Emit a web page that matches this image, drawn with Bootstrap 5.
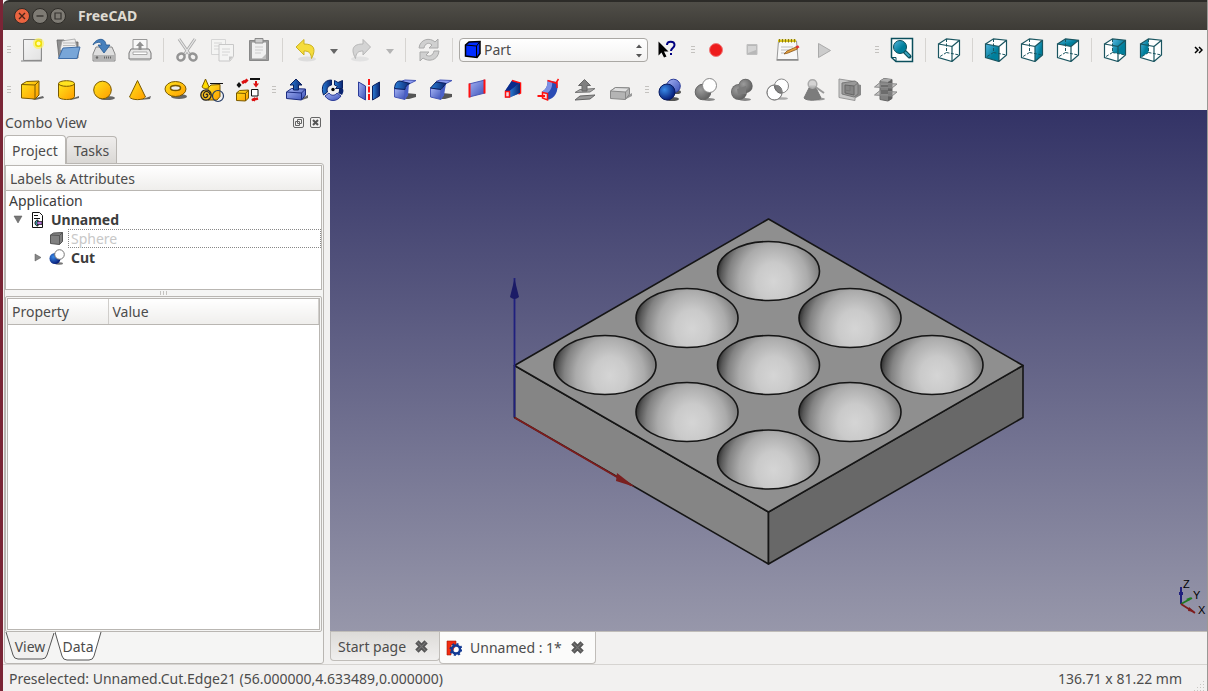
<!DOCTYPE html>
<html lang="en">
<head>
<meta charset="utf-8">
<meta name="viewport" content="width=device-width, initial-scale=1">
<title>FreeCAD</title>
<link href="https://cdn.jsdelivr.net/npm/bootstrap@5.3.0/dist/css/bootstrap.min.css" rel="stylesheet">
<style>
body{font-family:"Noto Sans","Open Sans",sans-serif;font-size:14px;line-height:19px;color:#4c4c4c;background:#f2f1f0;border-left:3px solid #7a2536;border-right:1px solid #9a9894}
button{font:inherit;color:inherit;border:0;background:none;padding:0}
.titlebar{height:30px;padding-left:10px;background:linear-gradient(#504e48,#3d3b36);border-top:2px solid #2c2b28;border-radius:6px 0 0 0;color:#dfdbd2}
.titlebar h1{font-size:14px;line-height:18px;font-weight:700;padding-left:11px}
.winbtn{width:18px;height:18px}
.winbtn svg,.tool svg,.viewsmall svg{display:block}
.toolrow{height:40px}
.tool{width:36px;height:36px;display:flex;align-items:center;justify-content:center;flex:none}
.tool.slim{width:20px}
.tool svg{width:24px;height:24px;overflow:visible}
.grip{width:11px;height:12px;flex:none;background:linear-gradient(#c4c2bf,#c4c2bf) 4px 2px/4px 1px no-repeat,linear-gradient(#c4c2bf,#c4c2bf) 4px 5px/4px 1px no-repeat,linear-gradient(#c4c2bf,#c4c2bf) 4px 8px/4px 1px no-repeat}
.divider{width:11px;height:24px;flex:none;background:linear-gradient(#d6d4d1,#d6d4d1) 5px 0/1px 100% no-repeat}
.group-gap{margin-left:2px}
.group-wide{margin-left:29px}
.bench{width:189px;margin:0 1px}
.bench select{appearance:none;width:100%;height:24px;font-size:14px;line-height:18px;color:#4c4c4c;border:1px solid #aaa8a4;border-radius:4px;padding:0 24px;background:linear-gradient(#fff,#f3f2f1)}
.bench svg{pointer-events:none}
.workspace{min-height:0}
.combo{width:327px;flex:none;padding:0 6px 0 1px}
.combo-head{height:25px;padding:0 2px 0 1px}
.sidetab{height:29px;line-height:27px;padding:0 7px;border:1px solid #b9b6b2;border-bottom:0;border-radius:4px 4px 0 0;background:linear-gradient(#fff,#f7f7f6);margin-bottom:-1px;position:relative}
.sidetab.idle{height:27px;padding:0 7px;background:linear-gradient(#efedec,#dad8d5);margin:0}
.pane{border:1px solid #b9b6b2;border-radius:0 3px 3px 3px;background:#f5f5f4;padding:1px 1px 2px 0;min-height:0}
.treebox{height:125px;background:#fff;border:1px solid #b9b6b2}
.headcell{height:25px;line-height:25px;padding:0 4px;background:linear-gradient(#fff,#efeeec);border-bottom:1px solid #b9b6b2}
.treebox ul{color:#3c3c3c}
.treebox li>div{height:19px}
.rootrow{padding-left:3px}
.faded{color:#c8c8c8;border:1px dotted #888;line-height:17px;padding-left:2px}
.split i{display:block;width:8px;height:4px;margin:1px auto;background:repeating-linear-gradient(90deg,#c4c2bf 0 1px,transparent 1px 3px)}
.propbox{border:1px solid #b9b6b2;padding:1px;border-radius:2px;min-height:0}
.propbox>div{border:1px solid #b9b6b2;background:#fff}
.propbox table{table-layout:fixed}
.propbox th{font-weight:400;height:25px;padding:0 4px;background:linear-gradient(#fff,#efeeec);border-bottom:1px solid #b9b6b2;border-right:1px solid #d0cecb}
.propbox th:first-child{width:100px}
.foot-tab{height:29px;width:50px;position:relative}
.foot-tab svg{position:absolute;left:0;top:0}
.foot-tab span{position:relative}
.scene{background:linear-gradient(#333366,#9797aa);min-height:0}
.doctab{height:29px;padding:0 8px 0 7px;border:1px solid #c0bdb9;border-top:0;border-radius:0 0 4px 4px;background:linear-gradient(#dddbd8,#f0efee);gap:8px}
.doctab.first{padding-right:10px}
.doctab.current{height:32px;padding:0 10px 0 6px;background:#fbfbfa;margin-left:-1px}
.docbar{height:33px;border-top:1px solid #c0bdb9}
.status{height:27px;border-top:1px solid #d6d4d1;padding:0 25px 0 6px;line-height:27px}
</style>
</head>
<body class="vh-100 d-flex flex-column overflow-hidden">
<svg width="0" height="0" class="position-absolute" aria-hidden="true">
<defs>
<linearGradient id="yel" x1="0" y1="0" x2="1" y2="1"><stop offset="0" stop-color="#ffe51c"/><stop offset="1" stop-color="#ff9c00"/></linearGradient>
<linearGradient id="blu" x1="0" y1="0" x2="1" y2="1"><stop offset="0" stop-color="#a6b4f4"/><stop offset="1" stop-color="#3a50b8"/></linearGradient>
<linearGradient id="nav" x1="0" y1="0" x2="1" y2="0"><stop offset="0" stop-color="#2a7fd8"/><stop offset="1" stop-color="#0a2470"/></linearGradient>
<linearGradient id="gry" x1="0" y1="0" x2="1" y2="1"><stop offset="0" stop-color="#fafafa"/><stop offset="1" stop-color="#bcbcbc"/></linearGradient>
<linearGradient id="teal" x1="0" y1="0" x2="1" y2="1"><stop offset="0" stop-color="#56b6e0"/><stop offset=".6" stop-color="#007f9c"/></linearGradient>
<radialGradient id="ball" cx=".35" cy=".35" r=".65"><stop offset="0" stop-color="#3a8be8"/><stop offset="1" stop-color="#08207c"/></radialGradient>
<radialGradient id="gball" cx=".35" cy=".35" r=".75"><stop offset="0" stop-color="#9c9c9c"/><stop offset="1" stop-color="#5c5c5c"/></radialGradient>
<linearGradient id="dk" x1="0" y1="0" x2="1" y2="1"><stop offset="0" stop-color="#c0c0c0"/><stop offset="1" stop-color="#626262"/></linearGradient>
<symbol id="wire" viewBox="0 0 24 24"><path d="M1.500 6 15 8.500V23.500L1.500 19.500ZM1.500 6 9.500.8 22.500 2.200V17L15 23.500M15 8.500 22.500 2.200" fill="none" stroke="#1a5560" stroke-width="1.200"/><path d="M9.500 1V14.500L1.500 19.500M9.500 14.500 22.500 17" fill="none" stroke="#1a5560" stroke-dasharray="3 1.500"/></symbol>
<symbol id="xmark" viewBox="0 0 13 13"><path d="m2.500 2.500 8 8m0-8-8 8" stroke="#555" stroke-width="4"/><path d="m3 3 7 7m0-7-7 7" stroke="#777" stroke-width="1"/></symbol>
</defs></svg>

<header class="titlebar d-flex align-items-center">
<button class="winbtn" aria-label="Close"><svg width="18" height="18"><circle cx="9" cy="9" r="7.500" fill="#ea6440" stroke="#2e2c28"/><path d="m6 6 6 6m0-6-6 6" stroke="#4a2418" stroke-width="1.400"/></svg></button>
<button class="winbtn" aria-label="Minimize"><svg width="18" height="18"><circle cx="9" cy="9" r="7.500" fill="#7e7b74" stroke="#2e2c28"/><path d="M5.500 9h7" stroke="#35332f" stroke-width="1.400"/></svg></button>
<button class="winbtn" aria-label="Maximize"><svg width="18" height="18"><circle cx="9" cy="9" r="7.500" fill="#7e7b74" stroke="#2e2c28"/><path d="M6 6h6v6H6z" fill="none" stroke="#35332f" stroke-width="1.200"/></svg></button>
<h1 class="m-0">FreeCAD</h1>
</header>

<nav class="toolrow d-flex align-items-center" aria-label="File and view tools">
<i class="grip"></i>
<button class="tool" aria-label="New"><svg viewBox="0 0 24 24"><path d="M1 23h21" stroke="#bbb" stroke-width="2"/><path d="M3.500 1.500h18v21h-18z" fill="url(#gry)" stroke="#8c8c8c"/><path d="M4.500 2.500h16v19h-16z" fill="#f2f2f2" opacity=".7"/><circle cx="18.500" cy="5.500" r="5.500" fill="#fff35a" opacity=".7"/><circle cx="18.500" cy="5.500" r="2.800" fill="#fffbb0" stroke="#f0e000" stroke-width="1.500"/></svg></button>
<button class="tool" aria-label="Open"><svg viewBox="0 0 24 24"><path d="M1 2h7l2 2h12v16H3z" fill="#8f8f8f" stroke="#666" stroke-width=".8"/><path d="m6 3 13-2 2 11H4z" fill="#eee" stroke="#999" stroke-width=".7"/><path d="M7 5h12M7 7.500h12" stroke="#bbb"/><path d="m7 10 17-1-3 11.500H2.500z" fill="#78a6d8" stroke="#3f6ea8"/></svg></button>
<button class="tool" aria-label="Save"><svg viewBox="0 0 24 24"><path d="m4 9-3 7v7h22v-7L20 9z" fill="#dedede" stroke="#888"/><path d="M2 17h20v5H2z" fill="#b4b4b4"/><path d="M12 19.500h8" stroke="#666" stroke-width="2" stroke-dasharray="1 1"/><circle cx="5" cy="19.500" r="1.200" fill="#666"/><path d="M1 7C3 1 13-2 14 7h4l-6 8-6-8h3.500C9 3 4 4 1 7Z" fill="#4680bd" stroke="#25568e" stroke-width=".8"/></svg></button>
<button class="tool" aria-label="Print"><svg viewBox="0 0 24 24"><path d="M5 12V1.500h14V12" fill="#f8f8f8" stroke="#999"/><path d="M3 11h18l2 4v6H1v-6z" fill="#e6e6e6" stroke="#777"/><path d="M12 3.500 8 8h2.500v4h3V8H16z" fill="#909090"/><path d="M5 14h14v2.500H5z" fill="#fff" stroke="#999" stroke-width=".8"/><path d="M2 21.500h20" stroke="#aaa" stroke-width="2"/></svg></button>
<i class="divider"></i>
<button class="tool" aria-label="Cut"><svg viewBox="0 0 24 24"><path d="m4 1 11 16M20 1 9 17" stroke="#aaa" stroke-width="3"/><path d="m4 1 11 16M20 1 9 17" stroke="#e8e8e8" stroke-width="1.300"/><ellipse cx="6" cy="19" rx="3.700" ry="3.300" fill="none" stroke="#949494" stroke-width="2.500" transform="rotate(-35 6 19)"/><ellipse cx="18" cy="19" rx="3.700" ry="3.300" fill="none" stroke="#949494" stroke-width="2.500" transform="rotate(35 18 19)"/></svg></button>
<button class="tool" aria-label="Copy"><svg viewBox="0 0 24 24" opacity=".75"><path d="M.5 1.500h14v15H.5z" fill="#f5f5f5" stroke="#ccc"/><path d="M3 5h8M3 8h5M3 11h5" stroke="#ccc"/><path d="M8 6.500h14.500v12L19 23H8z" fill="#f5f5f5" stroke="#bbb"/><path d="M11 11h8M11 14h8M11 17h6" stroke="#ccc"/><path d="M22 18.500h-4V23" fill="#bbb"/></svg></button>
<button class="tool" aria-label="Paste"><svg viewBox="0 0 24 24"><path d="M2.500 2.500h19v20h-19z" fill="#999" stroke="#888"/><path d="M5 4.500h14v16H5z" fill="#f0f0f0"/><path d="M8 .5h8V5H8z" fill="#ccc" stroke="#8a8a8a"/><path d="M8 9h8M8 12h8M8 15h6" stroke="#ccc" stroke-width="1.200"/><path d="m19 16-4.500 4.500H19z" fill="#bbb"/></svg></button>
<i class="divider"></i>
<button class="tool" aria-label="Undo"><svg viewBox="0 0 24 24"><ellipse cx="13" cy="21" rx="9" ry="2.500" fill="#ddd"/><path d="M2 9 10 1.500V6c9 0 13 4 7.500 14.500C17 15 15 13 10 13v4z" fill="#f5dc3c" stroke="#cbb222"/></svg></button>
<button class="tool slim" aria-label="Undo history"><svg viewBox="0 0 24 24"><path d="M8 11h8l-4 5z" fill="#666"/></svg></button>
<button class="tool" aria-label="Redo"><svg viewBox="0 0 24 24"><ellipse cx="10" cy="21" rx="9" ry="2.500" fill="#e2e2e2"/><path d="M20.500 9 13 1.500V6C4 6 0 10 5.500 20.500 6 15 8 13 13 13v4z" fill="#d4d4d4" stroke="#b6b6b6"/></svg></button>
<button class="tool slim" aria-label="Redo history"><svg viewBox="0 0 24 24"><path d="M8 11h8l-4 5z" fill="#b4b4b4"/></svg></button>
<i class="divider"></i>
<button class="tool" aria-label="Refresh"><svg viewBox="0 0 24 24"><path d="M2 10C3 1 13-1 18 4l3-3v9h-9l3-3c-3-3-7-2-8 3z" fill="#d0d0d0" stroke="#aaa"/><path d="M22 13c-1 10-11 11-16 7l-3 3v-9h9l-3 3c3 2 7 1 8-4z" fill="#d0d0d0" stroke="#aaa"/></svg></button>
<i class="divider"></i>
<div class="bench position-relative">
<select aria-label="Workbench"><option>Part</option></select>
<svg class="position-absolute top-0 start-0" width="188" height="24" aria-hidden="true"><path d="m6.500 7 3.500-3 11-.5v12L18 19.500 6.500 18z" fill="#002cff" stroke="#000" stroke-width="1.500"/><path d="M6.500 7 17.500 8v11.500M17.500 8 21 3.500" fill="none" stroke="#000"/><path d="M177 10h6l-3-3.500zM177 16h6l-3 3.500z" fill="#555"/></svg>
</div>
<button class="tool" aria-label="What's this"><svg viewBox="0 0 24 24"><path d="M3.500 3.500v14l3-3 2.500 5 2.500-1-2.500-5h4.500z" fill="#000"/><path d="M12 7c0-4.500 7.500-4.500 7.500 0 0 3-3.500 3-3.500 6" fill="none" stroke="#000080" stroke-width="2"/><path d="M15 15h2v2h-2z" fill="#000080"/></svg></button>
<i class="grip group-gap"></i>
<button class="tool" aria-label="Record macro"><svg viewBox="0 0 24 24"><circle cx="12" cy="12" r="6.500" fill="#ee1c1c" stroke="#f07a7a"/></svg></button>
<button class="tool" aria-label="Stop"><svg viewBox="0 0 24 24"><path d="M7 6.500h10v10H7z" fill="#b8b8b8" stroke="#c0c0c0"/><path d="M8 8h8v4l-8 3z" fill="#d4d4d4"/></svg></button>
<button class="tool" aria-label="Macros"><svg viewBox="0 0 24 24"><path d="M2.500 3h18l1.500 18.500H1z" fill="#f8f8f8" stroke="#999"/><path d="M.5 22h22" stroke="#888" stroke-width="1.500"/><path d="M2 1.500h18V4H2z" fill="#dcc51c"/><path d="M3.500 1v3.500m3-3.500v3.500m3-3.500v3.500m3-3.500v3.500m3-3.500v3.500m3-3.500v3.500" stroke="#8a7a10"/><path d="M5 9h12M5 12h9M5 15h4" stroke="#bbb"/><path d="m8 16 3-3 9-4 1.500 2-9.500 4z" fill="#e8a33c" stroke="#88551c" stroke-width=".8"/><path d="m19.500 8.500 2.500-1.200 1.500 2-2.500 1.500z" fill="#e23030"/></svg></button>
<button class="tool" aria-label="Run macro"><svg viewBox="0 0 24 24"><path d="M6.500 5.500v14l12-7z" fill="#ccc" stroke="#aaa"/></svg></button>
<i class="grip group-wide"></i><i class="group-gap"></i>
<button class="tool" aria-label="Fit all"><svg viewBox="0 0 24 24"><path d="M1.500.5h21v23H6l-4.500-4z" fill="#fff" stroke="#0b4f5c" stroke-width="1.500"/><path d="M1.500 19.500H6v4" fill="none" stroke="#0b4f5c"/><path d="m14 13 5.500 5.500" stroke="#0b4f5c" stroke-width="4" stroke-linecap="round"/><path d="m15 14 4.500 4.500" stroke="#3ba3bd" stroke-width="2"/><circle cx="10" cy="9" r="6.500" fill="url(#teal)" stroke="#0b4f5c"/></svg></button>
<i class="divider"></i>
<button class="tool" aria-label="Axonometric"><svg><path d="M1.500 6 9.500.8 22.500 2.200V17L15 23.500 1.500 19.500Z" fill="#fff"/><use href="#wire"/></svg></button>
<i class="divider"></i>
<button class="tool" aria-label="Front"><svg><path d="M1.500 6 9.500.8 22.500 2.200V17L15 23.500 1.500 19.500Z" fill="#fff"/><path d="M1.500 6 15 8.500v15l-13.500-4z" fill="url(#teal)"/><use href="#wire"/></svg></button>
<button class="tool" aria-label="Right"><svg><path d="M1.500 6 9.500.8 22.500 2.200V17L15 23.500 1.500 19.500Z" fill="#fff"/><path d="m15 8.500 7.500-6.300V17L15 23.500z" fill="url(#teal)"/><use href="#wire"/></svg></button>
<button class="tool" aria-label="Top"><svg><path d="M1.500 6 9.500.8 22.500 2.200V17L15 23.500 1.500 19.500Z" fill="#fff"/><path d="m1.500 6 8-5.200 13 1.400-7.500 6.300z" fill="url(#teal)"/><use href="#wire"/></svg></button>
<i class="divider"></i>
<button class="tool" aria-label="Rear"><svg><path d="M1.500 6 9.500.8 22.500 2.200V17L15 23.500 1.500 19.500Z" fill="#fff"/><path d="m9.500 1 13 1.200V17l-13-2.500z" fill="url(#teal)"/><use href="#wire"/></svg></button>
<button class="tool" aria-label="Left"><svg><path d="M1.500 6 9.500.8 22.500 2.200V17L15 23.500 1.500 19.500Z" fill="#fff"/><path d="m1.500 6 8-5v13.500l-8 5z" fill="url(#teal)"/><use href="#wire"/></svg></button>
<button class="ms-auto pe-1" aria-label="More tools"><svg class="d-block" width="9" height="8"><path d="m1 1 3 3-3 3m4-6 3 3-3 3" fill="none" stroke="#000" stroke-width="1.500"/></svg></button>
</nav>

<nav class="toolrow d-flex align-items-center" aria-label="Part tools">
<i class="grip"></i>
<button class="tool" aria-label="Box"><svg viewBox="0 0 24 24"><path d="m12 21 11-3 1 2-9 2z" fill="#666"/><path d="m1.500 6.500 5-3 12.500-.5v14l-4 4-13.500-1z" fill="url(#yel)" stroke="#7a5a00"/><path d="m1.500 6.500 13.500.5v14M15 7l4-4" fill="none" stroke="#7a5a00"/></svg></button>
<button class="tool" aria-label="Cylinder"><svg viewBox="0 0 24 24"><path d="M12 22 23 18v2l-8 2z" fill="#666"/><path d="M2.500 5.500v13c0 4 16 4 16 0v-13" fill="url(#yel)" stroke="#7a5a00"/><ellipse cx="10.500" cy="5.500" rx="8" ry="2.800" fill="#ffe320" stroke="#7a5a00"/></svg></button>
<button class="tool" aria-label="Sphere"><svg viewBox="0 0 24 24"><ellipse cx="15" cy="20" rx="8" ry="2" fill="#666"/><circle cx="10.500" cy="12" r="8.800" fill="url(#yel)" stroke="#7a5a00"/></svg></button>
<button class="tool" aria-label="Cone"><svg viewBox="0 0 24 24"><path d="m12 22 11-4-1 3z" fill="#666"/><path d="M9.500 2.500 1.500 19c2 3.500 14 3.500 16 0z" fill="url(#yel)" stroke="#7a5a00"/></svg></button>
<button class="tool" aria-label="Torus"><svg viewBox="0 0 24 24"><ellipse cx="15" cy="18.500" rx="8" ry="2.500" fill="#666"/><ellipse cx="11.500" cy="11" rx="10.500" ry="7.500" fill="url(#yel)" stroke="#7a5a00"/><ellipse cx="11.500" cy="10" rx="5" ry="2.500" fill="#eee" stroke="#7a5a00" stroke-width="1.500"/></svg></button>
<button class="tool" aria-label="Primitives"><svg viewBox="0 0 24 24"><path d="m8 10 3-3 9-.5v12l-3 3.500H8z" fill="url(#yel)" stroke="#7a5a00"/><path d="M5.500 1 2 9c1 2 6 2 7 0z" fill="#ffdc00" stroke="#7a5a00"/><path d="M10 5.500h13" stroke="#111"/><circle cx="6" cy="17" r="5.200" fill="#f6be20" stroke="#222" stroke-width="1.300"/><path d="M6 17c1-2 3 0 1 2s-5-1-3-4 6-1 6 2" fill="none" stroke="#222" stroke-width="1.200"/><circle cx="18" cy="18" r="5.500" fill="none" stroke="#223a66" stroke-width="1.200"/></svg></button>
<button class="tool" aria-label="Shape builder"><svg viewBox="0 0 24 24"><path d="m.5 7 2.500-3L5.500 7 3 10z" fill="#111"/><path d="m6 5 3-2m-.5 1.500 3-3" stroke="#d11" stroke-width="3"/><path d="M14 1h10" stroke="#111" stroke-width="2"/><path d="M20 3v4" stroke="#d11" stroke-width="2"/><path d="m17 5.500 3 4 3-4z" fill="#d11"/><path d="M15.500 11.500H22V18h-6.500z" fill="#fff" stroke="#111"/><path d="m.5 15 3-2.500 9-.5v8l-3 3-9-.5z" fill="url(#yel)" stroke="#7a5a00"/><path d="m.5 15 9 .5V23m0-7.500 3-3.500" fill="none" stroke="#7a5a00"/><path d="m16 22 6-1.500" stroke="#d11" stroke-width="2.500"/><path d="m15 22 4-3v4.500z" fill="#d11"/></svg></button>
<i class="grip group-gap"></i>
<button class="tool" aria-label="Extrude"><svg viewBox="0 0 24 24"><path d="m14 22 9-5v3l-6 2z" fill="#666"/><path d="m1.500 14 5-3.500 14 .5v6l-4 5-15-1.500z" fill="url(#blu)" stroke="#1b2b80"/><path d="m1.500 14 15 1v6.500m0-6.500 4-4" fill="none" stroke="#1b2b80"/><path d="M11 1 5 7h3.500v5h5V7H17z" fill="url(#nav)" stroke="#0a2060"/></svg></button>
<button class="tool" aria-label="Revolve"><svg viewBox="0 0 24 24"><path d="M10.500 2v5c-4 1-5 4-4 7l-4 3C-.5 9 2.500 2 10.500 2Z" fill="url(#nav)" stroke="#0a2060"/><path d="M4 18l4-3c2 3 6 3 8 0l4 3c-4 6-12 6-16 0Z" fill="url(#blu)" stroke="#2c3c98"/><path d="M13.500 2.500 17 4.500l4.500-2v8h-7l2-2-3-1.500z" fill="url(#nav)" stroke="#0a2060"/><path d="M18 11c0 2 0 3-1 4l4 2c1-2 2-4 1-6z" fill="#0a2470"/><circle cx="12" cy="11.500" r="1.700"/></svg></button>
<button class="tool" aria-label="Mirror"><svg viewBox="0 0 24 24"><path d="m1.500 4 7 4v14l-7-4z" fill="url(#blu)" stroke="#2c3c98"/><path d="m22.500 4-7 4v14l7-4z" fill="url(#nav)" stroke="#0a2060"/><path d="M12 1v22" stroke="#f11" stroke-width="2" stroke-dasharray="6 1.500"/></svg></button>
<button class="tool" aria-label="Fillet"><svg viewBox="0 0 24 24"><path d="m12 21 1-6 10 1v3l-7 2z" fill="#555"/><path d="M1.500 10.500 12 11.500v10L1.500 19z" fill="url(#blu)" stroke="#4858b8"/><path d="M12 21.500v-10c0-3 1-5 4-6l-1 12z" fill="#4a60c8"/><path d="m12 2 11 .5-6 3L6 4z" fill="#8c9cf0" stroke="#4858b8"/><path d="M1.500 10.500C2 5 4 3 7 3l10 2.500c-3 1-5 3-5 6z" fill="url(#nav)" stroke="#0a2060"/></svg></button>
<button class="tool" aria-label="Chamfer"><svg viewBox="0 0 24 24"><path d="m12 21 1-6 10 1v3l-7 2z" fill="#555"/><path d="M1.500 10 12 11.500v10L1.500 19z" fill="url(#blu)" stroke="#4858b8"/><path d="m12 21.500v-10l5-6-2 12z" fill="#4a60c8"/><path d="m11 2 12 .5-6 3-10-2z" fill="#8c9cf0" stroke="#4858b8"/><path d="M1.500 10 7 4l10 1.500-5 6z" fill="url(#nav)" stroke="#0a2060"/></svg></button>
<button class="tool" aria-label="Ruled surface"><svg viewBox="0 0 24 24"><path d="m4 6 16-4v13L4 19z" fill="url(#blu)"/><path d="m4 6 16-4M4 19l16-4" stroke="#4858b8"/><path d="M4.500 5.500v14M19.500 1.500v14" stroke="#f11" stroke-width="2"/></svg></button>
<button class="tool" aria-label="Loft"><svg viewBox="0 0 24 24"><path d="m4 13 7-10.500 8.500 2.500v10L8.500 19.500H4z" fill="#3b55b4"/><path d="m4 13 7-10.500L19 5 8.500 13z" fill="#0a2c8c"/><path d="M11 2.500 19.500 5v10l-2 1" fill="none" stroke="#f11" stroke-width="1.500"/><path d="M8.500 13 19 5v10L8.500 19.500z" fill="url(#nav)"/><path d="M4.500 13.500h4v5.500h-4z" fill="#f4d8e0" stroke="#f11" stroke-width="1.500"/></svg></button>
<button class="tool" aria-label="Sweep"><svg viewBox="0 0 24 24"><path d="M5 13.500C9 12 11 7 10.500 2.500L20 4c2 9-2 17-10 18z" fill="#2a4cb4"/><path d="M5 13.500C9 12 11 7 10.500 2.500L15 3c1 6-2 11-6 13z" fill="#7c90e4"/><path d="M10.500 2.500 19 5l2.500-4M20 4v6" fill="none" stroke="#f11" stroke-width="1.500"/><path d="M5.500 14.500l5 1V22l-5-2z" fill="#f4d8e0" stroke="#f11" stroke-width="1.500"/><path d="M.5 18H8" stroke="#f11" stroke-width="2"/></svg></button>
<button class="tool" aria-label="Offset"><svg viewBox="0 0 24 24"><path d="m2 22 5-4 15-1-5 4z" fill="#999" stroke="#666"/><path d="m2 14.500 5-3 15-1-5 3.500z" fill="#a8a8a8" stroke="#777"/><path d="m11.500 1.500-6 6H9V13h5V7.500h3.500z" fill="#808080" stroke="#666"/></svg></button>
<button class="tool" aria-label="Thickness"><svg viewBox="0 0 24 24"><path d="m13 21 10-6v3l-6 3z" fill="#999"/><path d="m1.500 13 5-3.500 14 .5v6l-4 5.500-15-1z" fill="#b4b4b4" stroke="#888"/><path d="m1.500 13 5-3.500 14 .5-4 4z" fill="#e0e0e0" stroke="#888"/><path d="M16.500 14v7" stroke="#888"/></svg></button>
<i class="grip group-gap"></i>
<button class="tool" aria-label="Boolean"><svg viewBox="0 0 24 24"><ellipse cx="14" cy="21" rx="7" ry="2" fill="#555"/><ellipse cx="19" cy="14" rx="4" ry="2" fill="#555"/><circle cx="15.500" cy="8" r="6.800" fill="url(#blu)" stroke="#2c3c98"/><circle cx="9" cy="14" r="8" fill="url(#ball)" stroke="#081a60"/></svg></button>
<button class="tool" aria-label="Cut shapes"><svg viewBox="0 0 24 24"><ellipse cx="15" cy="21.500" rx="6" ry="1.500" fill="#888"/><circle cx="9" cy="14" r="7.800" fill="url(#gball)" stroke="#666"/><circle cx="15.500" cy="7.500" r="7" fill="#fff" stroke="#888"/></svg></button>
<button class="tool" aria-label="Union"><svg viewBox="0 0 24 24"><ellipse cx="15" cy="21.500" rx="6" ry="1.500" fill="#888"/><circle cx="9" cy="14" r="8" fill="#666"/><circle cx="15.500" cy="8" r="7.200" fill="#666"/><circle cx="9" cy="14" r="7.300" fill="url(#gball)"/><circle cx="15.500" cy="8" r="6.500" fill="url(#gball)"/><path d="m7 11 9-3v8H8z" fill="#7c7c7c"/></svg></button>
<button class="tool" aria-label="Intersection"><svg viewBox="0 0 24 24"><ellipse cx="16" cy="20.500" rx="6" ry="1.300" fill="#aaa"/><circle cx="8.500" cy="14.500" r="7.500" fill="#fff" stroke="#888"/><circle cx="15.500" cy="8" r="7" fill="#fff" stroke="#888"/><path d="M8.500 8c4-2 8 2 7.500 7-4 1-7-3-7.500-7Z" fill="#808080" stroke="#666"/><circle cx="8.500" cy="14.500" r="7.500" fill="none" stroke="#888"/></svg></button>
<button class="tool" aria-label="Check geometry"><svg viewBox="0 0 24 24"><ellipse cx="17" cy="21" rx="6" ry="1.500" fill="#999"/><path d="M8 8 2 20c2 3 14 3 17 0L13 8z" fill="#7c7c7c" stroke="#777"/><circle cx="10.500" cy="6" r="4.300" fill="#ccc" fill-opacity=".8" stroke="#aaa" stroke-width="1.500"/><path d="m13.500 9 8.500 6" stroke="#999" stroke-width="2"/></svg></button>
<button class="tool" aria-label="Section"><svg viewBox="0 0 24 24"><path d="m16 5 7 2v10l-7 4z" fill="#888"/><path d="M1 1l16 2.500v19L1 19.500z" fill="#c8c8c8" stroke="#999"/><path d="M4 5l13-2 3 2v11l-4 3-12-3z" fill="#999" stroke="#777"/><path d="m7 7 9 1v9l-9-2z" fill="#858585" stroke="#666"/><path d="m16 8 4-3M7 12l5 1V8" stroke="#777" fill="none"/></svg></button>
<button class="tool" aria-label="Cross sections"><svg viewBox="0 0 24 24"><path d="m6 3 4-2.500 8 1v19L14 23l-8-1.500z" fill="#808080" stroke="#666"/><path d="m6 3 4-2.500 8 1L14 4z" fill="#aaa"/><path d="M14 4l4-2.500v19L14 23z" fill="#606060"/><path d="m.5 9 5-4L23 6l-5 4zM.5 17l5-4 17.500 1-5 4z" fill="#999" fill-opacity=".5" stroke="#888"/><path d="M7 7h7v2H7zM7 12h7v4H7z" fill="#6c6c6c"/></svg></button>
</nav>

<main class="workspace d-flex flex-grow-1">
<aside class="combo d-flex flex-column">
<div class="combo-head d-flex align-items-center"><span class="me-auto">Combo View</span>
<button class="viewsmall me-1" aria-label="Float panel"><svg width="13" height="13"><rect x="1.500" y="1.500" width="10" height="10" rx="1.500" fill="none" stroke="#666"/><path d="M5.500 3.500h4v4h-4zM3.500 5.500h4v4h-4z" fill="#f2f1f0" stroke="#666"/></svg></button>
<button class="viewsmall" aria-label="Close panel"><svg width="13" height="13"><rect x="1.500" y="1.500" width="10" height="10" rx="1.500" fill="none" stroke="#666"/><path d="m4 4 5 5m0-5-5 5" stroke="#555" stroke-width="2"/></svg></button></div>
<div class="d-flex align-items-end"><button class="sidetab">Project</button><button class="sidetab idle">Tasks</button></div>
<section class="pane d-flex flex-column flex-grow-1">
<div class="treebox"><div class="headcell">Labels &amp; Attributes</div>
<ul class="list-unstyled m-0">
<li><div class="rootrow">Application</div></li>
<li><div class="d-flex align-items-center fw-bold"><svg width="45" height="19" aria-hidden="true"><path d="M8 6h8l-4 7z" fill="#777" stroke="#555" stroke-width=".5"/><path d="M26.500 2.500h7l3 3v12h-10z" fill="#fff" stroke="#111"/><path d="M28 5.500h4M28 8.500h6" stroke="#111"/><path d="M32 10c-4 0-4 6 0 6z" fill="#48c8d0" stroke="#111"/><path d="M31 11.500h5v3h-5z" fill="#b070d0" stroke="#111" stroke-width=".7"/></svg>Unnamed</div></li>
<li><div class="d-flex align-items-center"><svg width="62" height="19" aria-hidden="true"><path d="m44.500 6 3-2 9-.5v9l-3 3-9-1z" fill="#808080" stroke="#555"/><path d="m44.500 6 9 .5v9m0-9 3-3" fill="none" stroke="#555"/></svg><span class="faded flex-grow-1">Sphere</span></div></li>
<li><div class="d-flex align-items-center fw-bold"><svg width="65" height="19" aria-hidden="true"><path d="M29 6v7l6-3.500z" fill="#888" stroke="#555" stroke-width=".5"/><ellipse cx="53" cy="15.500" rx="4" ry="1.200" fill="#777"/><circle cx="49" cy="10.500" r="5.500" fill="url(#ball)"/><circle cx="53.500" cy="6.500" r="4.800" fill="#fff" stroke="#777"/></svg>Cut</div></li>
</ul></div>
<div class="split"><i></i></div>
<div class="propbox flex-grow-1 d-flex"><div class="flex-grow-1"><table class="w-100"><thead><tr><th scope="col">Property</th><th scope="col">Value</th></tr></thead></table></div></div>
<div class="d-flex">
<button class="foot-tab"><svg width="52" height="29"><path d="M1 0 8 23q1 4 5 4h24q4 0 5-4L49 1" fill="#f1f0ef" stroke="#555"/></svg><span>View</span></button>
<button class="foot-tab"><svg width="52" height="29"><path d="M0 0 7 24q1 4 5 4h22q4 0 5-4L46 0" fill="#fff" stroke="#555"/></svg><span class="pe-1">Data</span></button>
</div>
</section>
</aside>
<section class="d-flex flex-column flex-grow-1">
<div class="scene position-relative flex-grow-1">
<svg class="w-100 h-100 d-block" viewBox="330 110 877 521" role="img" aria-label="Plate with nine spherical pockets">
<defs>
<radialGradient id="cup" cx="0" cy="0" r=".56" gradientTransform="translate(.55 .68) scale(1 1.9)"><stop offset="0" stop-color="#d5d5d5"/><stop offset=".3" stop-color="#cacaca"/><stop offset=".6" stop-color="#ababab"/><stop offset=".8" stop-color="#828282"/><stop offset=".92" stop-color="#585858"/><stop offset="1" stop-color="#303030"/></radialGradient>
<ellipse id="pocket" rx="51" ry="29.500" fill="url(#cup)" stroke="#151515" stroke-width="1.600"/>
</defs>
<g stroke="#151515" stroke-width="1.600" stroke-linejoin="round"><path d="m514.500 365.500 254 146.500v52l-254-146.500z" fill="#858585"/><path d="m768.500 512 254.500-146.500v52L768.500 564z" fill="#686868"/><path d="m514.500 365.500 254-146.500L1023 365.500 768.500 512z" fill="#8f8f8f"/></g>
<use href="#pocket" x="768.500" y="271"/><use href="#pocket" x="687" y="318"/><use href="#pocket" x="850" y="318"/><use href="#pocket" x="605" y="365"/><use href="#pocket" x="768.500" y="365"/><use href="#pocket" x="932" y="365"/><use href="#pocket" x="687" y="412"/><use href="#pocket" x="850" y="412"/><use href="#pocket" x="768.500" y="459.500"/>
<path d="M514.500 417V278" stroke="#20207e" stroke-width="1.800"/><path d="m514.500 279-4.500 18q4.500 4 9 0z" fill="#1b1b66"/>
<path d="m514.500 417.500 117 68" stroke="#7e1c1c" stroke-width="1.800"/><path d="m617 473 18 14-19-6z" fill="#7a2020"/>
</svg>
<svg class="position-absolute bottom-0 end-0" width="34" height="56" font-family="Liberation Sans, sans-serif" font-size="11" aria-hidden="true"><path d="M8 29V12" stroke="#20207e" stroke-width="2"/><path d="M6 17h4v3H6z" fill="#20207e"/><path d="m8 29 11-6" stroke="#207820" stroke-width="1.800"/><path d="m13 24 5-2-2 4z" fill="#208020"/><path d="m8 29 14 9" stroke="#7e1c1c" stroke-width="1.800"/><path d="m16 32 6 5-7-1z" fill="#7e1c1c"/><text x="10" y="13">Z</text><text x="20" y="24">Y</text><text x="25" y="39">X</text></svg>
</div>
<div class="docbar d-flex align-items-start">
<button class="doctab first d-flex align-items-center">Start page<svg width="15" height="15"><use href="#xmark"/></svg></button>
<button class="doctab current d-flex align-items-center"><svg width="16" height="16"><path d="M1 1h9v4H5v2h4v3H5v5H1z" fill="#f22b10" stroke="#a01808" stroke-width=".6"/><circle cx="10" cy="9.500" r="4" fill="none" stroke="#123a94" stroke-width="2.500"/><circle cx="10" cy="9.500" r="5.500" fill="none" stroke="#123a94" stroke-width="2" stroke-dasharray="2 2.300"/><circle cx="10" cy="9.500" r="2.200" fill="#fff"/></svg>Unnamed : 1*<svg width="15" height="15"><use href="#xmark"/></svg></button>
</div>
</section>
</main>
<footer class="status d-flex justify-content-between position-relative"><span>Preselected: Unnamed.Cut.Edge21 (56.000000,4.633489,0.000000)</span><span>136.71 x 81.22 mm</span>
<svg class="position-absolute bottom-0 end-0" width="14" height="12" fill="#c8c6c3" aria-hidden="true"><path d="M10 2h1v1h-1zM7 5h1v1H7zM10 5h1v1h-1zM4 8h1v1H4zM7 8h1v1H7zM10 8h1v1h-1zM1 11h1v1H1zM4 11h1v1H4zM7 11h1v1H7zM10 11h1v1h-1z"/></svg></footer>
<script src="https://cdn.jsdelivr.net/npm/bootstrap@5.3.0/dist/js/bootstrap.bundle.min.js"></script>
</body>
</html>
